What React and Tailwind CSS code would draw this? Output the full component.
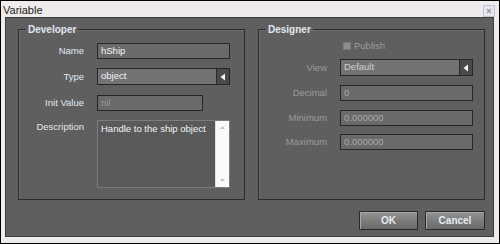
const fieldBox = 'h-[16px] border border-[#262626] bg-[#6a6a6a] flex items-center pl-[3px] text-[9.5px] leading-none';

function Arrow() {
  return (
    <div className="h-full w-[13px] bg-[#4a4a4a] border-l border-[#2a2a2a] flex items-center justify-center">
      <svg width="6" height="8" viewBox="0 0 6 8">
        <path d="M5 0.5 L0.5 4 L5 7.5 Z" fill="#f4f4f4" />
      </svg>
    </div>
  );
}

function Select({ value, dim }) {
  return (
    <div className="h-[17px] w-[133px] border border-[#262626] bg-[#737373] flex items-center">
      <span className={`flex-1 pl-[3px] text-[9.5px] ${dim ? 'text-[#d0d0d0]' : 'text-[#f2f5f8]'}`}>{value}</span>
      <Arrow />
    </div>
  );
}

function Row({ label, labelW, dim, mt, children, top }) {
  return (
    <div className={`flex ${top ? 'items-start' : 'items-center'} ${mt}`}>
      <div
        className={`shrink-0 text-right text-[9.5px] leading-[12px] ${top ? 'pt-[1px]' : ''} ${dim ? 'text-[#9c9c9c]' : 'text-[#e2e8ef]'}`}
        style={{ width: labelW }}
      >
        {label}
      </div>
      <div className="ml-[13px]">{children}</div>
    </div>
  );
}

function Group({ title, children }) {
  return (
    <fieldset className="w-[227px] h-[176px] border border-[#2c2c2c] shadow-[inset_1px_1px_0_#6c6c6c]">
      <legend className="ml-[7px] px-[2px] text-[10px] leading-[11px] font-bold text-[#e0e6ee]">{title}</legend>
      {children}
    </fieldset>
  );
}

function Button({ children, w }) {
  return (
    <button className={`${w} h-[19px] border border-[#2a2a2a] bg-gradient-to-b from-[#959595] via-[#7c7c7c] to-[#6a6a6a] shadow-[inset_1px_1px_0_#a8a8a8] text-[10px] font-bold text-[#e6ecf2]`}>
      {children}
    </button>
  );
}

export default function App() {
  return (
    <div className="w-[500px] h-[244px] border border-black bg-[#efebea] flex flex-col font-['Liberation_Sans',sans-serif]">
      <div className="h-[16px] shrink-0 flex items-center justify-between pl-[2px] pr-[4px]">
        <span className="text-[11px] text-[#1c1c1c] leading-none pt-[3px]">Variable</span>
        <div className="w-[12px] h-[12px] mt-[4px] border border-[#c4c4d4] bg-[#e6e6ee] flex items-center justify-center">
          <svg width="6" height="6" viewBox="0 0 6 6">
            <path d="M1 1 L5 5 M5 1 L1 5" stroke="#9a9aa8" strokeWidth="1.2" />
          </svg>
        </div>
      </div>

      <div className="flex-1 ml-[4px] mr-[5px] mb-[6px] bg-[#5f5f5f] border border-[#3e3e3e] flex flex-col pl-[12px] pr-[7px] pt-[6px]">
        <div className="flex gap-[13px]">
          <Group title="Developer">
            <div className="pt-[8px]">
              <Row label="Name" labelW="65px" mt="">
                <div className={`${fieldBox} w-[133px] text-[#f2f5f8]`}>hShip</div>
              </Row>
              <Row label="Type" labelW="65px" mt="mt-[9px]">
                <Select value="object" />
              </Row>
              <Row label="Init Value" labelW="65px" mt="mt-[10px]">
                <div className={`${fieldBox} w-[106px] text-[#9a9a9a]`}>nil</div>
              </Row>
              <Row label="Description" labelW="65px" mt="mt-[9px]" top>
                <div className="w-[133px] h-[68px] border border-[#7c7c7c] bg-[#5a5a5a] flex">
                  <div className="flex-1 pl-[3px] pt-[2px] text-[9.5px] leading-[12px] text-[#f2f5f8]">Handle to the ship object</div>
                  <div className="w-[14px] h-full bg-[#fafafa] border-l border-[#e0e0e0] flex flex-col items-center justify-between py-[5px]">
                    <svg width="5" height="3" viewBox="0 0 5 3"><path d="M0 3 L2.5 0 L5 3 Z" fill="#c4c4c4" /></svg>
                    <svg width="5" height="3" viewBox="0 0 5 3"><path d="M0 0 L2.5 3 L5 0 Z" fill="#c4c4c4" /></svg>
                  </div>
                </div>
              </Row>
            </div>
          </Group>

          <Group title="Designer">
            <div className="pt-[5px]">
              <div className="flex items-center pl-[84px]">
                <div className="w-[8px] h-[8px] bg-[#8c8c8c] border border-[#7a7a7a]" />
                <span className="ml-[3px] text-[9.5px] leading-[12px] text-[#9c9c9c]">Publish</span>
              </div>
              <Row label="View" labelW="68px" dim mt="mt-[7px]">
                <Select value="Default" dim />
              </Row>
              <Row label="Decimal" labelW="68px" dim mt="mt-[9px]">
                <div className={`${fieldBox} w-[133px] text-[#a8a8a8]`}>0</div>
              </Row>
              <Row label="Minimum" labelW="68px" dim mt="mt-[9px]">
                <div className={`${fieldBox} w-[133px] text-[#a8a8a8]`}>0.000000</div>
              </Row>
              <Row label="Maximum" labelW="68px" dim mt="mt-[8px]">
                <div className={`${fieldBox} w-[133px] text-[#a8a8a8]`}>0.000000</div>
              </Row>
            </div>
          </Group>
        </div>

        <div className="flex justify-end gap-[7px] mt-[11px] pr-[1px]">
          <Button w="w-[59px]">OK</Button>
          <Button w="w-[60px]">Cancel</Button>
        </div>
      </div>
    </div>
  );
}
